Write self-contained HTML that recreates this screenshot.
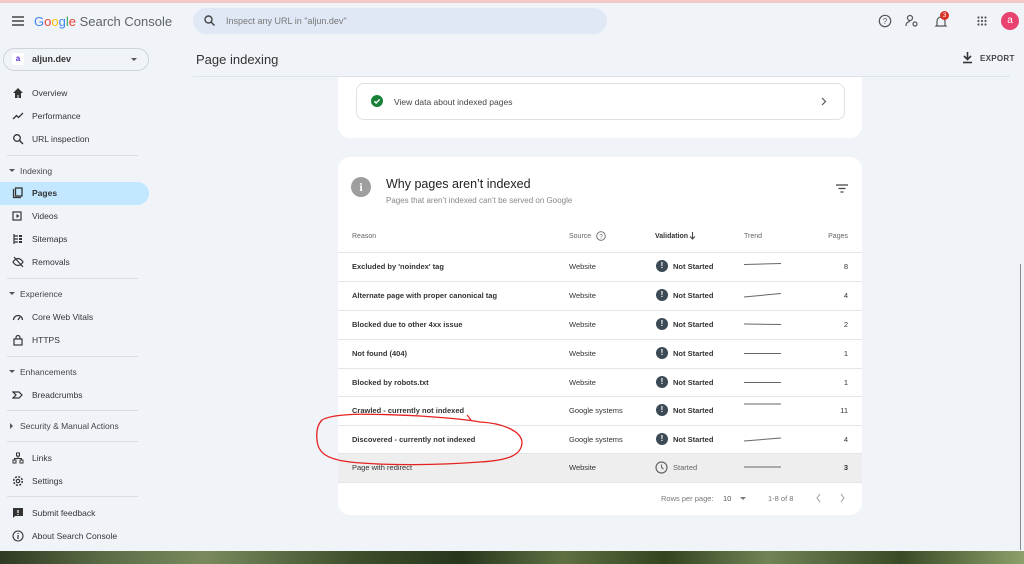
<!DOCTYPE html><html><head><meta charset="utf-8"><style>
*{margin:0;padding:0;box-sizing:border-box}
body{width:1024px;height:564px;overflow:hidden;background:#f0f4f9;font-family:"Liberation Sans",Arial,sans-serif;color:#1f1f1f;position:relative}
.a{position:absolute}
.t{font-size:8px;color:#444;white-space:nowrap}
.nav{position:absolute;left:32px;font-size:8.5px;color:#333}
.ico{position:absolute;left:12px;width:12px;height:12px}
.div{position:absolute;left:7px;width:131px;height:1px;background:#dadce0}
.sec{position:absolute;left:20px;font-size:8.5px;color:#444}
.sec:before{content:"";position:absolute;left:-11px;top:3px;border:3px solid transparent;border-top:3.5px solid #555}
.row{position:absolute;left:338px;width:524px;height:29px;border-top:1px solid #e6e6e6}
.row span{position:absolute;top:9px;font-size:7.5px;color:#333;white-space:nowrap}
.r1{left:14px;font-weight:bold}.r2{left:231px}.r3{left:335px;font-weight:bold}
.r5{right:14px}
.ex{position:absolute;left:318px;top:7px;width:12px;height:12px;border-radius:50%;background:#3c4a56;color:#fff;font-size:8px;font-weight:bold;font-style:normal;text-align:center;line-height:12px}
</style></head><body>
<div class="a" style="left:0;top:0;width:1024px;height:3px;background:#f6c9c9"></div>
<svg class="a" style="left:12px;top:16px" width="12" height="10"><path d="M0 1h12M0 5h12M0 9h12" stroke="#444" stroke-width="1.4"/></svg>
<div class="a" style="left:34px;top:14px;font-size:13px;color:#5f6368;white-space:nowrap"><span style="color:#4285f4">G</span><span style="color:#ea4335">o</span><span style="color:#fbbc05">o</span><span style="color:#4285f4">g</span><span style="color:#34a853">l</span><span style="color:#ea4335">e</span> Search Console</div>
<div class="a" style="left:193px;top:8px;width:414px;height:26px;border-radius:13px;background:#e1e8f5"></div>
<svg class="a" style="left:204px;top:15px" width="11" height="11"><circle cx="4.5" cy="4.5" r="3.5" stroke="#444" stroke-width="1.4" fill="none"/><path d="M7 7l3.5 3.5" stroke="#444" stroke-width="1.5"/></svg>
<div class="a t" style="left:226px;top:16px;font-size:9px;color:#777">Inspect any URL in "aljun.dev"</div>
<svg class="a" style="left:878px;top:14px" width="14" height="14"><circle cx="7" cy="7" r="5.7" stroke="#555" stroke-width="1.2" fill="none"/><text x="7" y="10" font-size="8" text-anchor="middle" fill="#555" font-family="Liberation Sans">?</text></svg>
<svg class="a" style="left:905px;top:14px" width="14" height="14"><circle cx="5" cy="4" r="2.5" stroke="#555" stroke-width="1.2" fill="none"/><path d="M1 12c0-3 2-4.5 4-4.5" stroke="#555" stroke-width="1.2" fill="none"/><circle cx="10" cy="10" r="2" stroke="#555" stroke-width="1.2" fill="none"/></svg>
<svg class="a" style="left:934px;top:14px" width="14" height="14"><path d="M3 11V7a4 4 0 018 0v4l1 1H2z" stroke="#555" stroke-width="1.2" fill="none"/></svg>
<div class="a" style="left:940px;top:11px;width:9px;height:9px;border-radius:50%;background:#d93025;color:#fff;font-size:6.5px;text-align:center;line-height:9px">3</div>
<svg class="a" style="left:977px;top:16px" width="10" height="10" fill="#555"><circle cx="1.5" cy="1.5" r="1.1"/><circle cx="5" cy="1.5" r="1.1"/><circle cx="8.5" cy="1.5" r="1.1"/><circle cx="1.5" cy="5" r="1.1"/><circle cx="5" cy="5" r="1.1"/><circle cx="8.5" cy="5" r="1.1"/><circle cx="1.5" cy="8.5" r="1.1"/><circle cx="5" cy="8.5" r="1.1"/><circle cx="8.5" cy="8.5" r="1.1"/></svg>
<div class="a" style="left:1001px;top:12px;width:18px;height:18px;border-radius:50%;background:#e8436f;color:#fff;font-size:10px;text-align:center;line-height:17px">a</div>
<div class="a" style="left:3px;top:48px;width:146px;height:23px;border:1px solid #cfd4da;border-radius:12px"></div>
<div class="a" style="left:12px;top:53px;width:12px;height:12px;background:#fff;border-radius:2px;font-size:8px;color:#5b2bd8;font-weight:bold;text-align:center;line-height:12px">a</div>
<div class="a" style="left:32px;top:54px;font-size:9px;font-weight:bold;color:#333">aljun.dev</div>
<div class="a" style="left:131px;top:58px;border:3px solid transparent;border-top:3.5px solid #555"></div>
<svg class="ico" style="top:87px" viewBox="0 0 12 12"><path d="M6 1L1 6h2v5h2.5V8h1v3H9V6h2z" fill="#333"/></svg>
<div class="nav" style="top:88px">Overview</div>
<svg class="ico" style="top:110px" viewBox="0 0 12 12"><path d="M1 9l3.5-3.5 2 2L11 3" stroke="#333" stroke-width="1.3" fill="none"/></svg>
<div class="nav" style="top:111px">Performance</div>
<svg class="ico" style="top:133px" viewBox="0 0 12 12"><circle cx="5" cy="5" r="3.3" stroke="#333" stroke-width="1.3" fill="none"/><path d="M7.5 7.5L11 11" stroke="#333" stroke-width="1.4"/></svg>
<div class="nav" style="top:134px">URL inspection</div>
<div class="div" style="top:155px"></div>
<div class="sec" style="top:166px">Indexing</div>
<div class="a" style="left:0;top:182px;width:149px;height:23px;background:#c2e7ff;border-radius:0 12px 12px 0"></div>
<svg class="ico" style="top:187px" viewBox="0 0 12 12"><path d="M1.5 2v8.5H9" stroke="#333" stroke-width="1.2" fill="none"/><rect x="3.5" y="1" width="6.5" height="8" fill="none" stroke="#333" stroke-width="1.3"/></svg>
<div class="nav" style="top:188px;font-weight:bold">Pages</div>
<svg class="ico" style="top:210px" viewBox="0 0 12 12"><rect x="1" y="2" width="8" height="8" fill="none" stroke="#333" stroke-width="1.2"/><path d="M4.5 4v4l3-2z" fill="#333"/></svg>
<div class="nav" style="top:211px">Videos</div>
<svg class="ico" style="top:233px" viewBox="0 0 12 12"><path d="M2 1v10M2 3h4M2 6h4M2 9h4" stroke="#333" stroke-width="1.2" fill="none"/><rect x="7" y="2" width="3" height="2" fill="#333"/><rect x="7" y="5" width="3" height="2" fill="#333"/><rect x="7" y="8" width="3" height="2" fill="#333"/></svg>
<div class="nav" style="top:234px">Sitemaps</div>
<svg class="ico" style="top:256px" viewBox="0 0 12 12"><path d="M1 6s2-3.5 5-3.5S11 6 11 6s-2 3.5-5 3.5S1 6 1 6zM2 1l9 10" stroke="#333" stroke-width="1.2" fill="none"/></svg>
<div class="nav" style="top:257px">Removals</div>
<div class="div" style="top:278px"></div>
<div class="sec" style="top:289px">Experience</div>
<svg class="ico" style="top:311px" viewBox="0 0 12 12"><path d="M1.5 9a4.5 4.5 0 119 0" stroke="#333" stroke-width="1.3" fill="none"/><path d="M6 9l2-3" stroke="#333" stroke-width="1.2"/></svg>
<div class="nav" style="top:312px">Core Web Vitals</div>
<svg class="ico" style="top:334px" viewBox="0 0 12 12"><rect x="2" y="5" width="8" height="6" fill="none" stroke="#333" stroke-width="1.2"/><path d="M4 5V3.5a2 2 0 014 0V5" stroke="#333" stroke-width="1.2" fill="none"/></svg>
<div class="nav" style="top:335px">HTTPS</div>
<div class="div" style="top:356px"></div>
<div class="sec" style="top:367px">Enhancements</div>
<svg class="ico" style="top:389px" viewBox="0 0 12 12"><path d="M1 3h6l3 3-3 3H1l3-3z" fill="none" stroke="#333" stroke-width="1.2"/></svg>
<div class="nav" style="top:390px">Breadcrumbs</div>
<div class="div" style="top:410px"></div>
<div class="a" style="left:20px;top:421px;font-size:8.5px;color:#444">Security &amp; Manual Actions</div>
<div class="a" style="left:10px;top:423px;border:3px solid transparent;border-left:3.5px solid #555"></div>
<div class="div" style="top:441px"></div>
<svg class="ico" style="top:452px" viewBox="0 0 12 12"><rect x="4.5" y="1" width="3" height="3" fill="none" stroke="#333"/><rect x="1" y="8" width="3" height="3" fill="none" stroke="#333"/><rect x="8" y="8" width="3" height="3" fill="none" stroke="#333"/><path d="M6 4v2.5M2.5 8V6.5h7V8" stroke="#333" fill="none"/></svg>
<div class="nav" style="top:453px">Links</div>
<svg class="ico" style="top:475px" viewBox="0 0 12 12"><circle cx="6" cy="6" r="4.3" fill="none" stroke="#333" stroke-width="1.5" stroke-dasharray="2 1.4"/><circle cx="6" cy="6" r="1.7" fill="none" stroke="#333" stroke-width="1.2"/></svg>
<div class="nav" style="top:476px">Settings</div>
<div class="div" style="top:496px"></div>
<svg class="ico" style="top:507px" viewBox="0 0 12 12"><path d="M1 1h10v8H3l-2 2z" fill="#333"/><path d="M6 3v3M6 7v1" stroke="#fff" stroke-width="1.2"/></svg>
<div class="nav" style="top:508px">Submit feedback</div>
<svg class="ico" style="top:530px" viewBox="0 0 12 12"><circle cx="6" cy="6" r="5" fill="none" stroke="#333" stroke-width="1.1"/><path d="M6 5v4M6 3v1" stroke="#333" stroke-width="1.2"/></svg>
<div class="nav" style="top:531px">About Search Console</div>
<div class="a" style="left:196px;top:52px;font-size:13px;color:#333">Page indexing</div>
<svg class="a" style="left:962px;top:52px" width="11" height="12"><path d="M5.5 0v7M2 4l3.5 3.5L9 4" stroke="#333" stroke-width="1.6" fill="none"/><path d="M1 10.5h9" stroke="#333" stroke-width="1.6"/></svg>
<div class="a" style="left:980px;top:54px;font-size:8px;font-weight:bold;color:#444;letter-spacing:.3px">EXPORT</div>
<div class="a" style="left:193px;top:76px;width:817px;height:1px;background:#dde3ea"></div>
<div class="a" style="left:1020px;top:264px;width:1px;height:286px;background:#888"></div>
<div class="a" style="left:338px;top:77px;width:524px;height:61px;background:#fff;border-radius:0 0 12px 12px"></div>
<div class="a" style="left:356px;top:83px;width:489px;height:37px;border:1px solid #e0e0e0;border-radius:8px"></div>
<svg class="a" style="left:371px;top:95px" width="12" height="12"><circle cx="6" cy="6" r="6" fill="#188038"/><path d="M3.3 6.2l1.8 1.8 3.6-3.6" stroke="#fff" stroke-width="1.4" fill="none"/></svg>
<div class="a t" style="left:394px;top:97px;font-size:8.5px">View data about indexed pages</div>
<svg class="a" style="left:821px;top:97px" width="6" height="9"><path d="M1 1l3.5 3.5L1 8" stroke="#555" stroke-width="1.2" fill="none"/></svg>
<div class="a" style="left:338px;top:157px;width:524px;height:358px;background:#fff;border-radius:12px;overflow:hidden">
<div class="a" style="left:13px;top:20px;width:20px;height:20px;border-radius:50%;background:#9e9e9e;color:#fff;font-weight:bold;font-size:12px;text-align:center;line-height:20px;font-family:'Liberation Serif',serif">i</div>
<div class="a" style="left:48px;top:20px;font-size:12.5px;color:#222">Why pages aren’t indexed</div>
<div class="a t" style="left:48px;top:39px;color:#888">Pages that aren’t indexed can’t be served on Google</div>
<svg class="a" style="left:498px;top:27px" width="12" height="9"><path d="M0 1h12M2.5 4.5h7M4.5 8h3" stroke="#444" stroke-width="1.3"/></svg>
<div class="a t" style="left:14px;top:76px;font-size:7px;color:#666">Reason</div>
<div class="a t" style="left:231px;top:76px;font-size:7px;color:#666">Source</div>
<svg class="a" style="left:258px;top:74px" width="10" height="10"><circle cx="5" cy="5" r="4.3" stroke="#666" fill="none" stroke-width=".9"/><text x="5" y="7.3" font-size="6.5" text-anchor="middle" fill="#666" font-family="Liberation Sans">?</text></svg>
<div class="a t" style="left:317px;top:76px;font-size:7px;font-weight:bold;color:#333">Validation</div>
<svg class="a" style="left:351px;top:75px" width="7" height="9"><path d="M3.5 0v7M1 4.5l2.5 2.5L6 4.5" stroke="#444" stroke-width="1.1" fill="none"/></svg>
<div class="a t" style="left:406px;top:76px;font-size:7px;color:#666">Trend</div>
<div class="a t" style="right:14px;top:76px;font-size:7px;color:#666">Pages</div>
</div>
<div class="row" style="top:252px"><span class="r1">Excluded by 'noindex' tag</span><span class="r2">Website</span><i class="ex">!</i><span class="r3">Not Started</span><span class="r5">8</span></div>
<div class="row" style="top:281px"><span class="r1">Alternate page with proper canonical tag</span><span class="r2">Website</span><i class="ex">!</i><span class="r3">Not Started</span><span class="r5">4</span></div>
<div class="row" style="top:310px"><span class="r1">Blocked due to other 4xx issue</span><span class="r2">Website</span><i class="ex">!</i><span class="r3">Not Started</span><span class="r5">2</span></div>
<div class="row" style="top:339px"><span class="r1">Not found (404)</span><span class="r2">Website</span><i class="ex">!</i><span class="r3">Not Started</span><span class="r5">1</span></div>
<div class="row" style="top:368px"><span class="r1">Blocked by robots.txt</span><span class="r2">Website</span><i class="ex">!</i><span class="r3">Not Started</span><span class="r5">1</span></div>
<div class="row" style="top:396px"><span class="r1">Crawled - currently not indexed</span><span class="r2">Google systems</span><i class="ex">!</i><span class="r3">Not Started</span><span class="r5">11</span></div>
<div class="row" style="top:425px"><span class="r1">Discovered - currently not indexed</span><span class="r2">Google systems</span><i class="ex">!</i><span class="r3">Not Started</span><span class="r5">4</span></div>
<div class="row" style="top:453px;background:#eeeeee"><span class="r1" style="font-weight:normal">Page with redirect</span><span class="r2">Website</span><span class="r3" style="font-weight:normal;color:#666">Started</span><span class="r5" style="font-weight:bold">3</span></div>
<div class="a" style="left:338px;top:482px;width:524px;height:1px;background:#e6e6e6"></div>
<svg class="a" style="left:655px;top:461px" width="13" height="13"><circle cx="6.5" cy="6.5" r="5.5" stroke="#666" stroke-width="1.2" fill="none"/><path d="M6.5 3.5v3l2 1.5" stroke="#666" stroke-width="1.1" fill="none"/></svg>
<svg class="a" style="left:743px;top:255px" width="40" height="220" stroke="#666" stroke-width="1" fill="none">
<path d="M1 9.5L38 8.5M1 42L38 38.5M1 69L38 69.5M1 98.5L38 98.5M1 127.5L38 127.5M1 149L38 149M1 186L38 183M1 212L38 212"/></svg>
<div class="a t" style="left:661px;top:494px;font-size:7.5px;color:#777">Rows per page:</div>
<div class="a t" style="left:723px;top:494px;font-size:7.5px;color:#555">10</div>
<div class="a" style="left:740px;top:497px;border:3px solid transparent;border-top:3.5px solid #777"></div>
<div class="a t" style="left:768px;top:494px;font-size:7.5px;color:#777">1-8 of 8</div>
<svg class="a" style="left:816px;top:493px" width="30" height="10" stroke="#aaa" stroke-width="1.1" fill="none"><path d="M4 1L1 5l3 4M25 1l3 4-3 4"/></svg>
<svg class="a" style="left:0;top:0" width="1024" height="564"><path d="M322 420C335 412 380 414 420 416C450 418 470 420 480 422C500 423 522 430 522 443C521 455 510 460 480 462C440 465 390 466 350 462C325 459 318 452 317 440C316 430 318 424 322 420" stroke="#e52222" stroke-width="1.3" fill="none"/><path d="M467 415l4 5" stroke="#e52222" stroke-width="1.2"/></svg>
<div class="a" style="left:0;top:551px;width:1024px;height:13px;background:linear-gradient(90deg,#2e3a22,#5b6b45 10%,#7a8a5e 20%,#3c4e2a 35%,#27361c 45%,#5f7042 55%,#33441f 65%,#708456 75%,#3a4a26 88%,#8da06a)"></div>
</body></html>
